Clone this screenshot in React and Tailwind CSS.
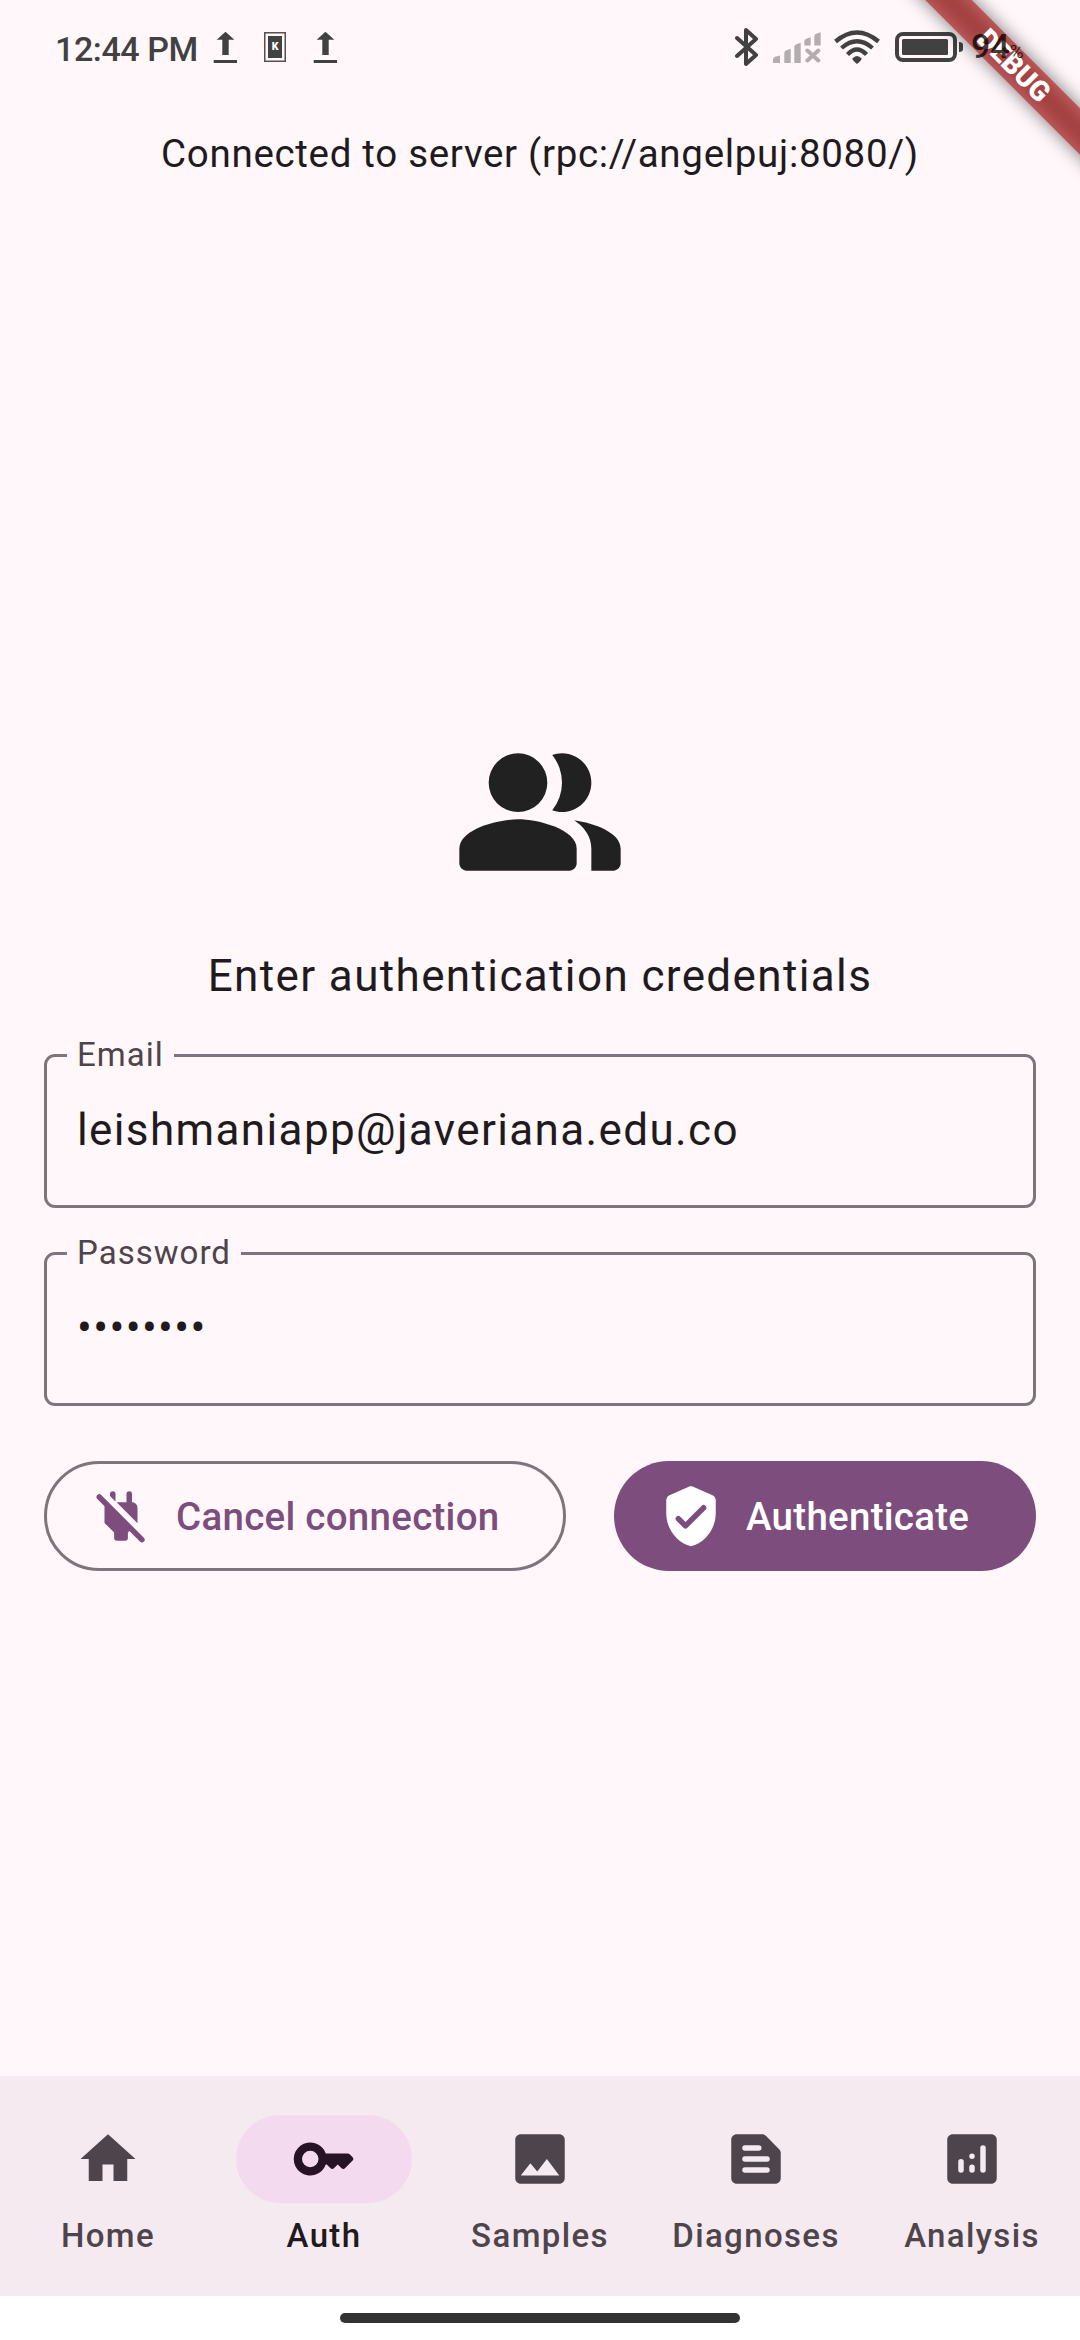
import React from "react";

const NAV = [
  { label: "Home", icon: <path d="M10 20v-6h4v6h5v-8h3L12 3 2 12h3v8z" /> },
  {
    label: "Auth",
    active: true,
    icon: (
      <path
        fillRule="evenodd"
        d="M12.65 10A6 6 0 1 0 12.65 14L13 14l1.3 1.3a1 1 0 0 0 1.4 0L17 14l1.3 1.3a1 1 0 0 0 1.42 0l2.6-2.62a1 1 0 0 0 0-1.4l-1-1a1 1 0 0 0-.7-.28zM7 15a3 3 0 1 1 0-6 3 3 0 0 1 0 6z"
      />
    ),
  },
  {
    label: "Samples",
    icon: (
      <path d="M21 19V5c0-1.1-.9-2-2-2H5c-1.1 0-2 .9-2 2v14c0 1.1.9 2 2 2h14c1.1 0 2-.9 2-2zM8.5 13.5l2.5 3.01L14.5 12l4.5 6H5l3.5-4.5z" />
    ),
  },
  {
    label: "Diagnoses",
    icon: (
      <path
        fillRule="evenodd"
        d="M20.41 8.41l-4.83-4.83c-.37-.37-.88-.58-1.41-.58H5c-1.1 0-2 .9-2 2v14c0 1.1.9 2 2 2h14c1.1 0 2-.9 2-2V9.83c0-.53-.21-1.04-.59-1.42zM8 7h5a1 1 0 0 1 0 2H8a1 1 0 0 1 0-2zm8 10H8a1 1 0 0 1 0-2h8a1 1 0 0 1 0 2zm0-4H8a1 1 0 0 1 0-2h8a1 1 0 0 1 0 2z"
      />
    ),
  },
  {
    label: "Analysis",
    icon: (
      <path
        fillRule="evenodd"
        d="M19 3H5c-1.1 0-2 .9-2 2v14c0 1.1.9 2 2 2h14c1.1 0 2-.9 2-2V5c0-1.1-.9-2-2-2zM8 17a1 1 0 0 1-1-1v-3a1 1 0 0 1 2 0v3a1 1 0 0 1-1 1zm4 0a1 1 0 0 1-1-1v-1a1 1 0 0 1 2 0v1a1 1 0 0 1-1 1zm0-5a1 1 0 1 1 0-2 1 1 0 0 1 0 2zm4 5a1 1 0 0 1-1-1V8a1 1 0 0 1 2 0v8a1 1 0 0 1-1 1z"
      />
    ),
  },
];

function Icon({ className, children }) {
  return (
    <svg viewBox="0 0 24 24" fill="currentColor" className={className}>
      {children}
    </svg>
  );
}

function UploadIcon() {
  return (
    <svg viewBox="0 0 24 32" className="h-8 w-6 shrink-0 fill-[#414141]">
      <path d="M12.5.7l8.8 8h-5.6V24H9.3V8.7H3.7zM.7 29H24v3H.7z" />
    </svg>
  );
}

function StatusBar() {
  return (
    <header className="flex h-[94px] items-center pl-[55px] text-[#414141]">
      <span className="w-[158px] pt-[3px] text-[34px] leading-[40px] font-medium tracking-[-0.4px] whitespace-nowrap">
        12:44 PM
      </span>
      <UploadIcon />
      <svg viewBox="0 0 22 30" className="ml-[27px] h-[30px] w-[22px]">
        <rect x=".75" y=".75" width="20.5" height="28.5" fill="none" stroke="#55514f" strokeWidth="1.5" />
        <rect x="4" y="4" width="14" height="22" fill="#414141" />
        <text x="11" y="18" textAnchor="middle" fontSize="10.5" fontWeight="900" fill="#fff">
          K
        </text>
      </svg>
      <div className="ml-[27px]">
        <UploadIcon />
      </div>
      <svg
        viewBox="0 0 24 40"
        className="ml-[398px] h-10 w-6"
        fill="none"
        stroke="#414141"
        strokeWidth="4"
        strokeLinejoin="round"
        strokeLinecap="round"
      >
        <path d="M2 11l19 17-10 9V3l10 9L2 29" />
      </svg>
      <svg viewBox="0 0 48 31" className="ml-[14px] h-[31px] w-12" fill="#b3adb0">
        <path d="M0 31v-3q0-2.500 2-3.200l5-1.300V31zM11.300 31V21q0-2 2-2.700l4.400-1.500V31zM21.300 31V15q0-2 2-2.700l4.400-1.500V31zM31.300 13.500V9.500q0-2 2-2.700l4.400-1.500v8.200zM41.300 13.500V4.500q0-2 2-2.700l4.400-1.500v13.200z" />
        <path d="M34.300 18.500l11 10M45.300 18.500l-11 10" stroke="#b3adb0" strokeWidth="4" strokeLinecap="round" />
      </svg>
      <svg viewBox="0 0 46 34" className="ml-[13px] h-[34px] w-[46px]" fill="none" stroke="#414141" strokeWidth="4.300">
        <path d="M1.500 11.500Q23-6.500 44.500 11.500" />
        <path d="M7.500 18Q23 4.500 38.500 18" />
        <path d="M13.500 24.500Q23 14.500 32.500 24.500" />
        <path d="M18.300 28.500q4.700-5 9.400 0 0 1.500-4.700 5.500-4.700-4-4.700-5.500z" fill="#414141" stroke="none" />
      </svg>
      <svg viewBox="0 0 68 30" className="ml-[15px] h-[30px] w-[68px]">
        <rect x="2" y="2" width="58" height="26" rx="6" fill="none" stroke="#414141" strokeWidth="4" />
        <rect x="7" y="7" width="46" height="16" rx="1.5" fill="#414141" />
        <path d="M64 10q4 0 4 3v4q0 3-4 3z" fill="#414141" />
      </svg>
      <span className="relative z-20 ml-[8px] flex items-baseline pt-[3px] text-[34px] leading-[40px] font-medium text-black/75">
        94<span className="text-[19px] font-normal">%</span>
      </span>
    </header>
  );
}

function DebugBanner() {
  return (
    <div className="pointer-events-none absolute top-0 right-0 z-10 h-[240px] w-[240px] overflow-hidden">
      <div className="absolute top-[49px] left-[14px] h-[33px] w-[320px] rotate-45">
        <div className="absolute inset-0 bg-black/50 blur-[9px]" />
        <div className="relative flex h-full items-center justify-center bg-[#b71c1ca0] text-[28px] font-black text-white">
          DEBUG
        </div>
      </div>
    </div>
  );
}

function Field({ label, value }) {
  return (
    <div className="relative h-[154px] rounded-[11px] border-[3px] border-[#80747c] pt-[47px] pl-[30px]">
      <span className="absolute top-[-22px] left-[20px] bg-[#fff7fa] px-[10px] text-[33px] leading-[39px] tracking-[1.03px] text-[#4e444b]">
        {label}
      </span>
      <span className="block text-[44px] leading-[52px] tracking-[1.375px] text-[#1e1a1d]">{value}</span>
    </div>
  );
}

export default function App() {
  return (
    <div className="relative flex h-[2340px] w-[1080px] flex-col overflow-hidden bg-[#fff7fa] font-[Roboto,sans-serif]">
      <StatusBar />
      <DebugBanner />
      <p className="mt-[32px] text-center text-[38.5px] leading-[55px] tracking-[0.688px] text-[#1e1a1d]">
        Connected to server (rpc://angelpuj:8080/)
      </p>

      <main className="mt-[543px] flex flex-1 flex-col px-[44px]">
        <Icon className="h-[176px] w-[176px] self-center text-[#212121]">
          <path d="M16.67 13.13C18.04 14.06 19 15.32 19 17v3h3c.55 0 1-.45 1-1v-2c0-2.18-3.57-3.47-6.33-3.87z" />
          <circle cx="9" cy="8" r="4" />
          <path d="M15 12c2.21 0 4-1.79 4-4s-1.79-4-4-4c-.47 0-.91.1-1.33.24a5.98 5.98 0 0 1 0 7.52c.42.14.86.24 1.33.24z" />
          <path d="M9 13c-2.67 0-8 1.34-8 4v2c0 .55.45 1 1 1h14c.55 0 1-.45 1-1v-2c0-2.66-5.33-4-8-4z" />
        </Icon>
        <h1 className="mt-[43px] text-center text-[44px] leading-[66px] tracking-[1.375px] text-[#1e1a1d]">
          Enter authentication credentials
        </h1>
        <div className="mt-[45px] flex flex-col gap-[44px]">
          <Field label="Email" value="leishmaniapp@javeriana.edu.co" />
          <Field label="Password" value="••••••••" />
        </div>
        <div className="mt-[55px] flex justify-between">
          <button className="flex h-[110px] w-[522px] items-center gap-[22px] rounded-full border-[3px] border-[#80747c] pl-[41px] text-[38.5px] font-medium tracking-[0.275px] whitespace-nowrap text-[#7d4e7d]">
            <Icon className="h-[66px] w-[66px] shrink-0">
              <path d="M18 14.6V9c0-1.1-.9-2-2-2V4a1 1 0 0 0-2 0v3h-3.6zM10 6.7V4a1 1 0 0 0-2 0v.7z" />
              <path d="M6 7v7.5L9.5 18v2a1 1 0 0 0 1 1h3a1 1 0 0 0 1-1v-2l.9-.9z" />
              <path d="M4.1 5.1l15.5 15.5" stroke="currentColor" strokeWidth="2" strokeLinecap="round" />
            </Icon>
            <span className="pt-[2px]">Cancel connection</span>
          </button>
          <button className="flex h-[110px] w-[422px] items-center gap-[22px] rounded-full bg-[#7d4e7d] pl-[44px] text-[38.5px] font-medium tracking-[0.275px] whitespace-nowrap text-white">
            <Icon className="h-[66px] w-[66px] shrink-0">
              <path d="M11.19 1.36l-7 3.11C3.47 4.79 3 5.51 3 6.3V11c0 5.55 3.84 10.74 9 12 5.16-1.26 9-6.45 9-12V6.3c0-.79-.47-1.51-1.19-1.83l-7-3.11c-.51-.23-1.11-.23-1.62 0zm-1.9 14.93L6.7 13.7a.996.996 0 1 1 1.41-1.41L10 14.17l5.88-5.88a.996.996 0 1 1 1.41 1.41l-6.59 6.59a.996.996 0 0 1-1.41 0z" />
            </Icon>
            <span className="pt-[2px]">Authenticate</span>
          </button>
        </div>
      </main>

      <nav className="grid h-[220px] shrink-0 grid-cols-5 bg-[#f5eaf0]">
        {NAV.map(({ label, icon, active }) => (
          <div key={label} className="flex flex-col items-center pt-[39px]">
            <div
              className={
                active
                  ? "flex h-[88px] w-[176px] items-center justify-center rounded-full bg-[#f4daef] text-[#261325]"
                  : "flex h-[88px] w-[176px] items-center justify-center text-[#4e444b]"
              }
            >
              <Icon className="h-[66px] w-[66px]">{icon}</Icon>
            </div>
            <span
              className={
                active
                  ? "mt-[11px] text-[33px] leading-[44px] font-medium tracking-[1.375px] text-[#1e1a1d]"
                  : "mt-[11px] text-[33px] leading-[44px] font-medium tracking-[1.375px] text-[#4e444b]"
              }
            >
              {label}
            </span>
          </div>
        ))}
      </nav>
      <footer className="flex h-[44px] shrink-0 justify-center bg-white pt-[17px]">
        <div className="h-[10px] w-[400px] rounded-full bg-[#333333]" />
      </footer>
    </div>
  );
}
